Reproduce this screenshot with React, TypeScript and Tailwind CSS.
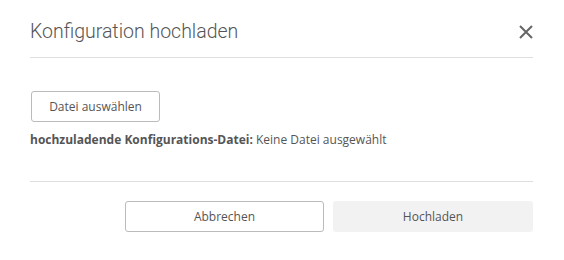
export default function App() {
  return (
    <div className="w-[564px] h-[260px] bg-white pl-[30px] pr-[31px] text-[#555]" style={{ fontFamily: '"Open Sans", sans-serif' }}>
      <div className="flex items-center justify-between h-[58px] border-b border-[#dedede] pt-[6px]">
        <h1 className="text-[19.5px] font-light text-[#555]" style={{ fontFamily: 'Roboto, sans-serif' }}>
          Konfiguration hochladen
        </h1>
        <button className="text-[#666]" aria-label="Schließen">
          <svg width="14" height="14" viewBox="0 0 14 14" stroke="currentColor" strokeWidth="2" fill="none">
            <path d="M1 1L13 13M13 1L1 13" />
          </svg>
        </button>
      </div>

      <div className="pt-[33px] pb-[32px] border-b border-[#dedede]">
        <button className="w-[129px] h-[31px] border border-[#bbb] rounded-[3px] text-[12px] text-[#555] ml-[1px]">
          Datei auswählen
        </button>
        <p className="mt-[9px] text-[12px] leading-[18px]">
          <span className="font-bold">hochzuladende Konfigurations-Datei:</span> Keine Datei ausgewählt
        </p>
      </div>

      <div className="flex justify-end gap-[9px] pt-[19px]">
        <button className="w-[199px] h-[31px] border border-[#bbb] rounded-[3px] text-[12px] text-[#555]">
          Abbrechen
        </button>
        <button className="w-[200px] h-[31px] bg-[#f2f2f2] rounded-[3px] text-[12px] text-[#555]">
          Hochladen
        </button>
      </div>
    </div>
  );
}
